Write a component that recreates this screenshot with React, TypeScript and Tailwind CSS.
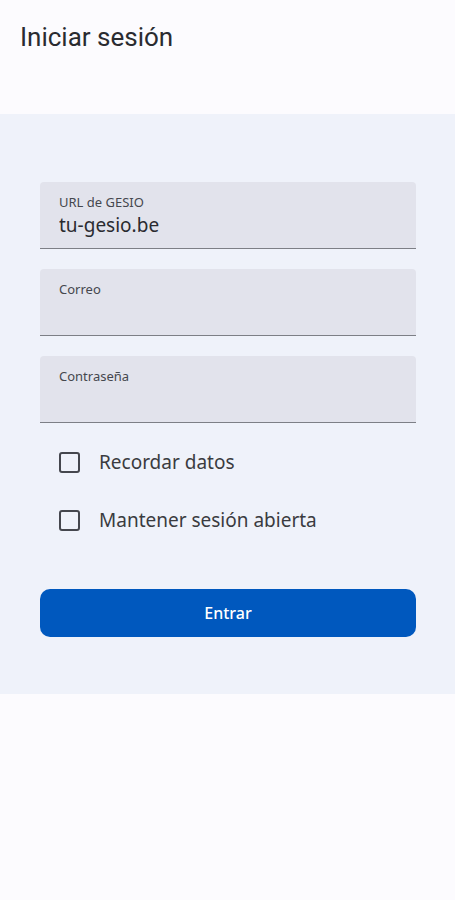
import React, { useState } from 'react';

type FieldProps = {
  label: string;
  value?: string;
  type?: string;
};

const Field: React.FC<FieldProps> = ({ label, value = '', type = 'text' }) => {
  const [val, setVal] = useState(value);
  return (
    <label className="flex h-[67px] flex-col rounded-t-[4px] border-b-[1.5px] border-[#7d7f86] bg-[#e2e3ec] px-[19px] pt-[12px]">
      <span className="text-[13px] leading-[16px] text-[#45474e]">{label}</span>
      <input
        type={type}
        value={val}
        onChange={(e) => setVal(e.target.value)}
        className="mt-[3px] w-full bg-transparent text-[19px] leading-[24px] text-[#2a2b30] outline-none"
      />
    </label>
  );
};

const Check: React.FC<{ label: string }> = ({ label }) => {
  const [on, setOn] = useState(false);
  return (
    <button
      type="button"
      onClick={() => setOn(!on)}
      className="flex h-[48px] items-center gap-[19px] pl-[19px] text-left"
    >
      <span
        className={
          on
            ? 'flex h-[21px] w-[21px] items-center justify-center rounded-[3px] border-2 border-[#0058be] bg-[#0058be] text-[14px] text-white'
            : 'h-[21px] w-[21px] rounded-[3px] border-2 border-[#45474e]'
        }
      >
        {on ? '✓' : null}
      </span>
      <span className="text-[19px] text-[#3a3b40]">{label}</span>
    </button>
  );
};

export default function App() {
  return (
    <div
      className="min-h-[900px] w-full bg-[#fcfbfe]"
      style={{ fontFamily: '"Noto Sans", "Open Sans", sans-serif' }}
    >
      {/* Top bar */}
      <div className="h-[114px] px-[20px] pt-[20px]">
        <h1
          className="text-[26px] leading-[34px] text-[#2a2b30]"
          style={{ fontFamily: 'Roboto, "Noto Sans", sans-serif' }}
        >
          Iniciar sesión
        </h1>
      </div>

      {/* Login panel */}
      <div className="flex flex-col bg-[#eff2fa] pb-[57px] pl-[40px] pr-[39px] pt-[68px]">
        <div className="flex flex-col gap-[20px]">
          <Field label="URL de GESIO" value="tu-gesio.be" />
          <Field label="Correo" type="email" />
          <Field label="Contraseña" type="password" />
        </div>

        <div className="mt-[15px] flex flex-col gap-[10px]">
          <Check label="Recordar datos" />
          <Check label="Mantener sesión abierta" />
        </div>

        <button
          type="button"
          className="mt-[45px] h-[48px] w-full rounded-[10px] bg-[#0058be] text-[16px] font-medium text-white"
        >
          Entrar
        </button>
      </div>
    </div>
  );
}
